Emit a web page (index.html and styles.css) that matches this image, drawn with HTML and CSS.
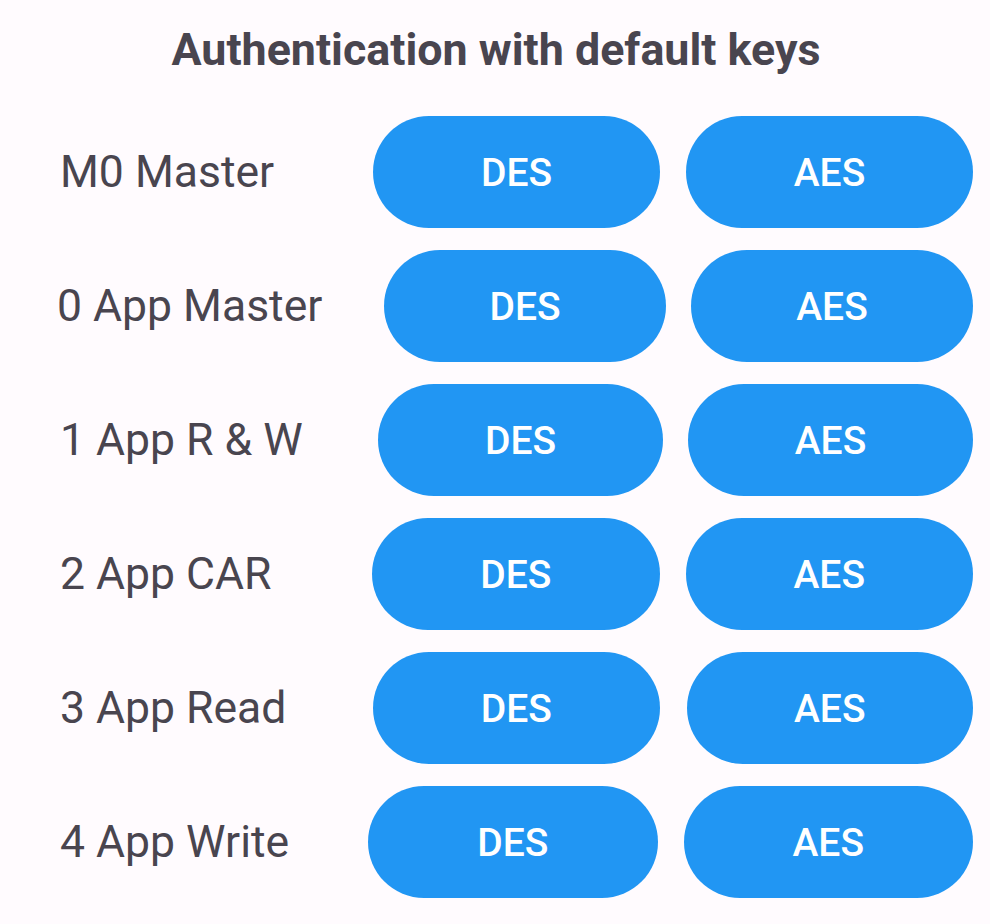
FILE: index.html
```html
<!DOCTYPE html>
<html>
<head>
<meta charset="utf-8">
<link rel="stylesheet" href="styles.css">
</head>
<body>
<main class="screen">
  <h1 class="title">Authentication with default keys</h1>
  <div class="list">
    <div class="row">
      <span class="label">M0 Master</span>
      <div class="actions actions--600"><button class="btn">DES</button><button class="btn">AES</button></div>
    </div>
    <div class="row">
      <span class="label label--tight">0 App Master</span>
      <div class="actions actions--589 actions--g25"><button class="btn">DES</button><button class="btn">AES</button></div>
    </div>
    <div class="row">
      <span class="label">1 App R &amp; W</span>
      <div class="actions actions--595 actions--g25"><button class="btn">DES</button><button class="btn">AES</button></div>
    </div>
    <div class="row">
      <span class="label">2 App CAR</span>
      <div class="actions actions--601"><button class="btn">DES</button><button class="btn">AES</button></div>
    </div>
    <div class="row">
      <span class="label">3 App Read</span>
      <div class="actions actions--600 actions--g27"><button class="btn">DES</button><button class="btn">AES</button></div>
    </div>
    <div class="row">
      <span class="label">4 App Write</span>
      <div class="actions actions--605"><button class="btn">DES</button><button class="btn">AES</button></div>
    </div>
  </div>
</main>
</body>
</html>
```
FILE: styles.css
```css
* { box-sizing: border-box; }
html, body {
  margin: 0;
  padding: 0;
  background: #fffbfe;
}
body {
  font-family: Roboto, "Liberation Sans", sans-serif;
  color: #49454f;
  width: 990px;
  height: 924px;
  overflow: hidden;
}
.screen {
  display: flex;
  flex-direction: column;
}
.title {
  margin: 23px 0 0 0;
  font-size: 44.8px;
  font-weight: 700;
  line-height: 53px;
  text-align: center;
  color: #49454f;
  padding-left: 2px;
}
.list {
  display: flex;
  flex-direction: column;
  gap: 22px;
  margin-top: 40px;
  padding: 0 17px 0 60px;
}
.row {
  display: flex;
  align-items: center;
  height: 112px;
}
.label {
  flex: 1;
  font-size: 44.5px;
  font-weight: 400;
  white-space: nowrap;
}
.label--tight { margin-left: -3px; }
.actions {
  display: flex;
  gap: 26px;
  height: 112px;
}
.actions--g25 { gap: 25px; }
.actions--g27 { gap: 27px; }
.actions--589 { width: 589px; }
.actions--595 { width: 595px; }
.actions--600 { width: 600px; }
.actions--601 { width: 601px; }
.actions--605 { width: 605px; }
.btn {
  flex: 1;
  height: 112px;
  border: none;
  border-radius: 56px;
  background: #2196f3;
  color: #ffffff;
  font-family: Roboto, "Liberation Sans", sans-serif;
  font-size: 39px;
  font-weight: 500;
  padding: 0;
  margin: 0;
  padding-top: 2px;
}
```
